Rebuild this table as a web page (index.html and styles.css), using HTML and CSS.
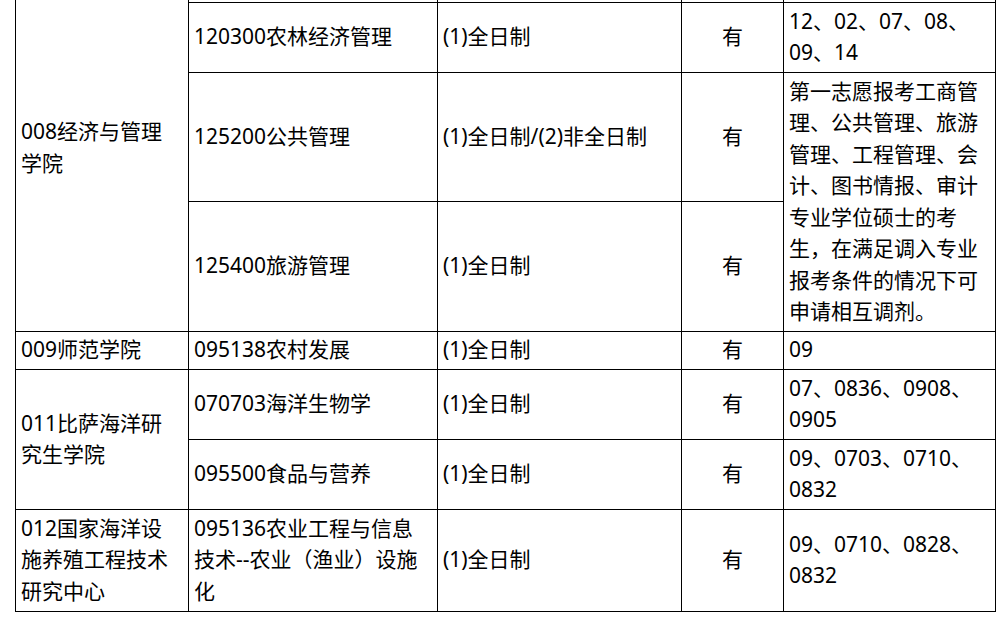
FILE: index.html
```html
<!DOCTYPE html>
<html lang="zh-CN">
<head>
<meta charset="utf-8">
<title>调剂专业表</title>
<link rel="stylesheet" href="styles.css">
</head>
<body>
<div class="viewport">
  <table class="grid">
    <colgroup>
      <col class="c-college">
      <col class="c-major">
      <col class="c-mode">
      <col class="c-has">
      <col class="c-note">
    </colgroup>
    <tbody>
      <tr class="r-38">
        <td rowspan="4">008经济与管理<br>学院</td>
        <td></td>
        <td></td>
        <td class="center"></td>
        <td></td>
      </tr>
      <tr class="r-70">
        <td>120300农林经济管理</td>
        <td>(1)全日制</td>
        <td class="center">有</td>
        <td>12、02、07、08、<br>09、14</td>
      </tr>
      <tr class="r-129">
        <td>125200公共管理</td>
        <td>(1)全日制/(2)非全日制</td>
        <td class="center">有</td>
        <td rowspan="2">第一志愿报考工商管<br>理、公共管理、旅游<br>管理、工程管理、会<br>计、图书情报、审计<br>专业学位硕士的考<br>生，在满足调入专业<br>报考条件的情况下可<br>申请相互调剂。</td>
      </tr>
      <tr class="r-130">
        <td>125400旅游管理</td>
        <td>(1)全日制</td>
        <td class="center">有</td>
      </tr>
      <tr class="r-38">
        <td>009师范学院</td>
        <td>095138农村发展</td>
        <td>(1)全日制</td>
        <td class="center">有</td>
        <td>09</td>
      </tr>
      <tr class="r-70">
        <td rowspan="2">011比萨海洋研<br>究生学院</td>
        <td>070703海洋生物学</td>
        <td>(1)全日制</td>
        <td class="center">有</td>
        <td>07、0836、0908、<br>0905</td>
      </tr>
      <tr class="r-70">
        <td>095500食品与营养</td>
        <td>(1)全日制</td>
        <td class="center">有</td>
        <td>09、0703、0710、<br>0832</td>
      </tr>
      <tr class="r-102">
        <td>012国家海洋设<br>施养殖工程技术<br>研究中心</td>
        <td>095136农业工程与信息<br>技术--农业（渔业）设施<br>化</td>
        <td>(1)全日制</td>
        <td class="center">有</td>
        <td>09、0710、0828、<br>0832</td>
      </tr>
    </tbody>
  </table>
</div>
</body>
</html>
```

FILE: styles.css
```css
html, body {
  margin: 0;
  padding: 0;
  background: #ffffff;
}

.viewport {
  width: 1004px;
  height: 619px;
  overflow: hidden;
  padding-left: 15px;
  box-sizing: border-box;
}

.grid {
  margin-top: -36px;
  border-collapse: collapse;
  table-layout: fixed;
  width: 980px;
  font-family: "Noto Sans", "Noto Sans CJK SC", sans-serif;
  font-size: 21px;
  line-height: 31.5px;
  color: #000000;
}

.c-college { width: 173px; }
.c-major { width: 249px; }
.c-mode { width: 244px; }
.c-has { width: 102px; }
.c-note { width: 212px; }

.grid td {
  border: 1px solid #000000;
  padding: 0 5px 1px 5px;
  vertical-align: middle;
  text-align: left;
  white-space: nowrap;
}

.grid td.center {
  text-align: center;
}

.r-38 { height: 38px; }
.r-70 { height: 70px; }
.r-102 { height: 102px; }
.r-129 { height: 129px; }
.r-130 { height: 130px; }
```
